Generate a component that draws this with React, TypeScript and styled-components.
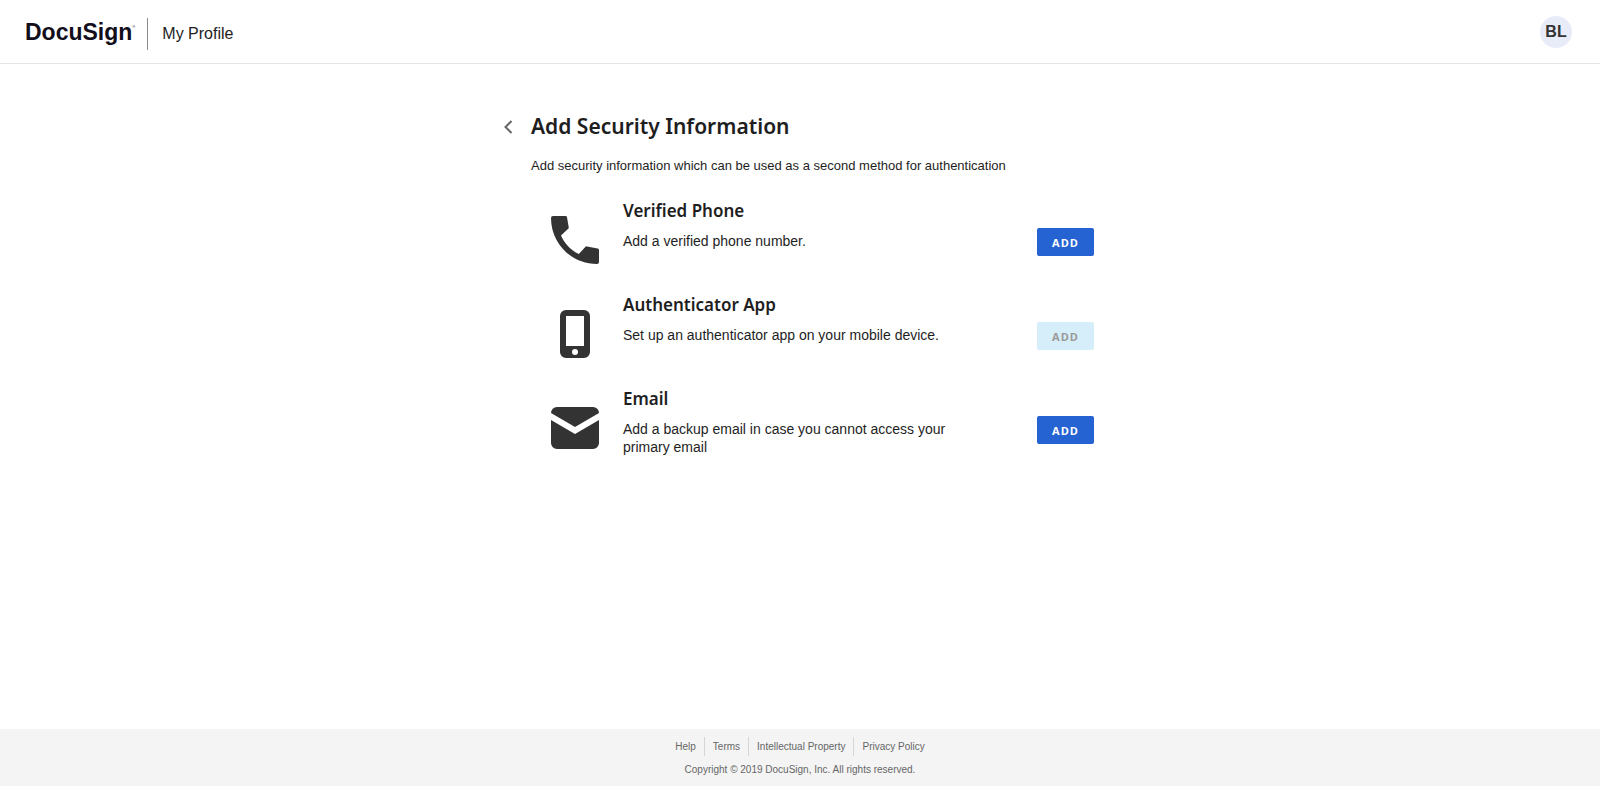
import React from 'react';
import styled, { createGlobalStyle } from 'styled-components';

const GlobalStyle = createGlobalStyle`
  *, *::before, *::after { box-sizing: border-box; }
  body {
    margin: 0;
    background: #fff;
    color: #1e1e1e;
    font-family: "Liberation Sans", Arial, sans-serif;
  }
`;

const Page = styled.div`
  display: flex;
  flex-direction: column;
  min-height: 100vh;
`;

const Header = styled.header`
  display: flex;
  align-items: center;
  height: 64px;
  padding: 0 28px 0 25px;
  border-bottom: 1px solid #e5e5e5;
`;

const Logo = styled.a`
  display: flex;
  padding-top: 1px;
  color: #130e1b;
  font-size: 23px;
  font-weight: 700;
  line-height: 30px;
  text-decoration: none;
`;

const Registered = styled.span`
  font-size: 4px;
  font-weight: 400;
  line-height: 20px;
`;

const AppName = styled.div`
  margin: 4px auto 0 12px;
  padding-left: 14px;
  border-left: 1px solid #8c8c8c;
  font-size: 16px;
  line-height: 32px;
`;

const Avatar = styled.button`
  width: 32px;
  height: 32px;
  padding: 0;
  border: 0;
  border-radius: 50%;
  background: #e8ecf8;
  color: #333;
  font: 700 16px/32px "Liberation Sans", Arial, sans-serif;
`;

const Main = styled.main`
  flex: 1;
  width: 100%;
  max-width: 600px;
  margin: 0 auto;
  padding: 48px 6px 40px 0;
`;

const TitleRow = styled.div`
  display: flex;
  align-items: flex-start;
`;

const Back = styled.button`
  display: flex;
  width: 31px;
  padding: 8px 0 0 4px;
  border: 0;
  background: none;
  color: #666;
`;

const Title = styled.h1`
  margin: 0;
  font: 600 21px/28px "Noto Sans", sans-serif;
`;

const Body = styled.div`
  padding-left: 31px;
`;

const Intro = styled.p`
  margin: 16px 0 23px;
  font-size: 13px;
  line-height: 20px;
`;

const Methods = styled.ul`
  margin: 0;
  padding: 0 0 0 20px;
  list-style: none;
`;

const Method = styled.li`
  display: flex;
  align-items: flex-start;
  min-height: 94px;
`;

const MethodIcon = styled.div`
  flex: none;
  width: 48px;
  margin: 17px 24px 0 0;
  color: #333;

  svg { display: block; }
`;

const MethodText = styled.div`
  flex: 1;
  max-width: 350px;
  margin-right: auto;
`;

const MethodTitle = styled.h2`
  margin: 0 0 9px;
  font: 600 17px/24px "Noto Sans", sans-serif;
`;

const MethodDescription = styled.p`
  margin: 0;
  font-size: 14px;
  line-height: 18px;
`;

const AddButton = styled.button`
  width: 57px;
  height: 28px;
  margin-top: 29px;
  padding: 1px 0 0;
  border: 0;
  border-radius: 2px;
  background: #2463d1;
  color: #fff;
  font: 700 11px/27px "Open Sans", sans-serif;
  letter-spacing: 1px;

  &:disabled {
    background: #d6edfa;
    color: #999;
  }
`;

const Footer = styled.footer`
  display: flex;
  flex-direction: column;
  align-items: center;
  height: 57px;
  padding-top: 8px;
  background: #f4f4f4;
  color: #666;
  font-size: 10px;
`;

const FooterLinks = styled.nav`
  display: flex;
  line-height: 19px;
`;

const FooterLink = styled.a`
  padding: 0 8px;
  color: inherit;
  text-decoration: none;

  & + & { border-left: 1px solid #d5d5d5; }
`;

const Copyright = styled.p`
  margin: 8px 0 0;
  line-height: 12px;
`;

const PhoneIcon = () => (
  <svg width="48" height="48" viewBox="0 0 48 48" fill="currentColor" aria-hidden="true">
    <path d="M2 0H14.500Q15.800 0 16 1.300L17.700 11Q17.900 12 17.200 12.700L10 19.500C13.500 27.500 19.500 34 27.800 38L34.300 30.900Q35 30.200 36 30.400L46.700 32.400Q48 32.700 48 34V46Q48 48 46 48C20.500 48 0 27.500 0 2Q0 0 2 0Z" />
  </svg>
);

const DeviceIcon = () => (
  <svg width="48" height="48" viewBox="0 0 48 48" fill="currentColor" aria-hidden="true">
    <path
      fillRule="evenodd"
      d="M15 0h18a6 6 0 0 1 6 6v36a6 6 0 0 1-6 6H15a6 6 0 0 1-6-6V6a6 6 0 0 1 6-6ZM15 6v30h18V6ZM24 39a3 3 0 1 0 0 6a3 3 0 0 0 0-6Z"
    />
  </svg>
);

const MailIcon = () => (
  <svg width="48" height="48" viewBox="0 0 48 48" fill="currentColor" aria-hidden="true">
    <path d="M6 3h36a6 6 0 0 1 6 6L24 23L0 9a6 6 0 0 1 6-6Z" />
    <path d="M0 16l24 14l24-14v23a6 6 0 0 1-6 6H6a6 6 0 0 1-6-6Z" />
  </svg>
);

const methods = [
  { title: 'Verified Phone', text: 'Add a verified phone number.', Icon: PhoneIcon, disabled: false },
  {
    title: 'Authenticator App',
    text: 'Set up an authenticator app on your mobile device.',
    Icon: DeviceIcon,
    disabled: true,
  },
  {
    title: 'Email',
    text: 'Add a backup email in case you cannot access your primary email',
    Icon: MailIcon,
    disabled: false,
  },
];

const links = ['Help', 'Terms', 'Intellectual Property', 'Privacy Policy'];

export default function App() {
  return (
    <>
      <GlobalStyle />
      <Page>
        <Header>
          <Logo href="#">
            DocuSign<Registered>®</Registered>
          </Logo>
          <AppName>My Profile</AppName>
          <Avatar type="button">BL</Avatar>
        </Header>
        <Main>
          <TitleRow>
            <Back type="button" aria-label="Back">
              <svg width="9" height="14" viewBox="0 0 9 14" fill="none" stroke="currentColor" strokeWidth="2" aria-hidden="true">
                <path d="M7.500 1L1.500 7L7.500 13" />
              </svg>
            </Back>
            <Title>Add Security Information</Title>
          </TitleRow>
          <Body>
            <Intro>Add security information which can be used as a second method for authentication</Intro>
            <Methods>
              {methods.map(({ title, text, Icon, disabled }) => (
                <Method key={title}>
                  <MethodIcon>
                    <Icon />
                  </MethodIcon>
                  <MethodText>
                    <MethodTitle>{title}</MethodTitle>
                    <MethodDescription>{text}</MethodDescription>
                  </MethodText>
                  <AddButton type="button" disabled={disabled} aria-label={`ADD ${title}`}>
                    ADD
                  </AddButton>
                </Method>
              ))}
            </Methods>
          </Body>
        </Main>
        <Footer>
          <FooterLinks>
            {links.map((label) => (
              <FooterLink key={label} href="#">
                {label}
              </FooterLink>
            ))}
          </FooterLinks>
          <Copyright>Copyright © 2019 DocuSign, Inc. All rights reserved.</Copyright>
        </Footer>
      </Page>
    </>
  );
}
